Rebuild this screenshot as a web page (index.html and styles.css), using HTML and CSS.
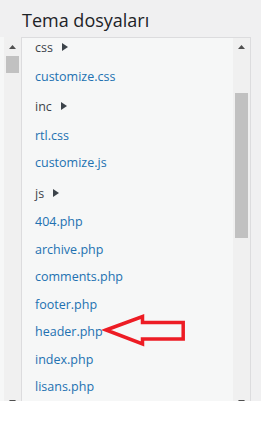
FILE: index.html
```html
<!DOCTYPE html>
<html lang="tr">
<head>
<meta charset="utf-8">
<title>Tema dosyaları</title>
<link rel="stylesheet" href="styles.css">
</head>
<body>
<div class="screen">
  <h2 class="title">Tema dosyaları</h2>
  <div class="main">
    <div class="edge"></div>
    <div class="sb sb-left">
      <div class="btn btn-up"><svg width="7" height="4" viewBox="0 0 7 4"><polygon points="0,4 3.5,0 7,4" fill="#505050"/></svg></div>
      <div class="thumb thumb-left"></div>
      <div class="spacer"></div>
      <div class="btn btn-down"><svg width="7" height="4" viewBox="0 0 7 4"><polygon points="0,0 7,0 3.5,4" fill="#505050"/></svg></div>
    </div>
    <div class="panel">
      <ul class="tree">
        <li class="folder">css <svg class="caret" width="6" height="8" viewBox="0 0 6 8"><polygon points="0,0 6,4 0,8" fill="#3c434a"/></svg></li>
        <li class="file"><a href="#">customize.css</a></li>
        <li class="folder">inc <svg class="caret" width="6" height="8" viewBox="0 0 6 8"><polygon points="0,0 6,4 0,8" fill="#3c434a"/></svg></li>
        <li class="file"><a href="#">rtl.css</a></li>
        <li class="file"><a href="#">customize.js</a></li>
        <li class="folder">js <svg class="caret" width="6" height="8" viewBox="0 0 6 8"><polygon points="0,0 6,4 0,8" fill="#3c434a"/></svg></li>
        <li class="file"><a href="#">404.php</a></li>
        <li class="file"><a href="#">archive.php</a></li>
        <li class="file"><a href="#">comments.php</a></li>
        <li class="file"><a href="#">footer.php</a></li>
        <li class="file"><a href="#">header.php</a></li>
        <li class="file"><a href="#">index.php</a></li>
        <li class="file"><a href="#">lisans.php</a></li>
      </ul>
      <div class="sb sb-right">
        <div class="btn btn-up-r"><svg width="7" height="4" viewBox="0 0 7 4"><polygon points="0,4 3.5,0 7,4" fill="#505050"/></svg></div>
        <div class="thumb thumb-right"></div>
        <div class="spacer"></div>
        <div class="btn btn-down"><svg width="7" height="4" viewBox="0 0 7 4"><polygon points="0,0 7,0 3.5,4" fill="#505050"/></svg></div>
      </div>
    </div>
    <div class="gutter"></div>
  </div>
  <svg class="annot" width="261" height="401" viewBox="0 0 261 401">
    <path d="M106 330 L142.5 316.5 L142.5 322.5 L183.2 322.5 L183.2 339 L142.5 339 L142.5 344 Z" fill="none" stroke="#ed1c24" stroke-width="3.5" stroke-linejoin="miter"/>
  </svg>
</div>
</body>
</html>
```
FILE: styles.css
```css
html, body {
  margin: 0;
  background: #ffffff;
}
body {
  width: 261px;
  font-family: "Open Sans", "Noto Sans", sans-serif;
}
.screen {
  position: relative;
  height: 401px;
  overflow: hidden;
  background: #f0f0f1;
}
.title {
  margin: 0;
  height: 37px;
  box-sizing: border-box;
  padding: 8px 0 0 22px;
  font-size: 18px;
  line-height: 24px;
  font-weight: 500;
  color: #1d2327;
}
.main {
  display: flex;
  height: 380px;
}
.edge {
  width: 4px;
  flex: none;
  background: #f6f7f7;
}
.sb {
  width: 17px;
  flex: none;
  background: #f0f0f0;
  display: flex;
  flex-direction: column;
  align-items: center;
}
.sb-left {
  height: 373px;
}
.btn {
  width: 17px;
  height: 17px;
  box-sizing: border-box;
  display: flex;
  justify-content: center;
  align-items: flex-start;
  flex: none;
}
.btn svg {
  display: block;
}
.btn-up {
  padding-top: 8px;
}
.btn-up-r {
  padding-top: 7px;
}
.btn-down {
  padding-top: 7px;
}
.thumb {
  width: 13px;
  background: #c1c1c1;
  flex: none;
}
.thumb-left {
  margin-top: 2px;
  height: 17px;
}
.thumb-right {
  margin-top: 38px;
  height: 145px;
}
.spacer {
  flex: 1;
}
.panel {
  width: 230px;
  flex: none;
  box-sizing: border-box;
  border: 1px solid #dcdcde;
  border-bottom: none;
  background: #f6f7f7;
  display: flex;
  overflow: hidden;
}
.sb-right {
  height: 372px;
}
.tree {
  flex: 1;
  margin: -7px 0 0;
  padding: 0 0 0 13px;
  list-style: none;
  font-size: 12.5px;
  line-height: 27.5px;
}
.tree li {
  margin: 0;
  white-space: nowrap;
}
.folder {
  padding: 3px 0 1px;
  color: #3c434a;
}
.caret {
  margin-left: 6px;
  vertical-align: 1px;
}
.file a {
  color: #2271b1;
  text-decoration: none;
}
.gutter {
  flex: 1;
  background: #f0f0f1;
}
.annot {
  position: absolute;
  left: 0;
  top: 0;
  pointer-events: none;
}
```
